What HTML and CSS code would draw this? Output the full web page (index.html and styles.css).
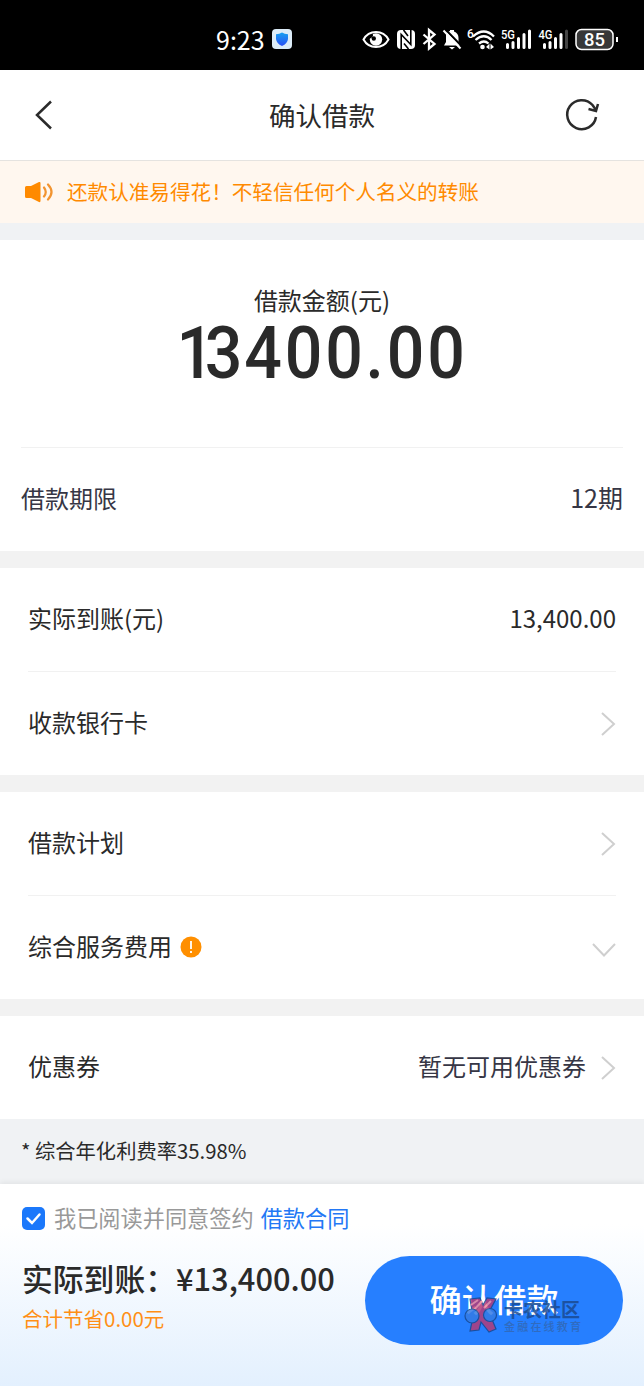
FILE: index.html
```html
<!DOCTYPE html>
<html lang="zh-CN">
<head>
    <meta charset="UTF-8">
    <meta name="viewport" content="width=device-width, initial-scale=1.0">
    <title>确认借款</title>
    <link rel="stylesheet" href="styles.css">
</head>
<body>
    <div class="status-bar">
        <div class="status-time">
            <span>9:23</span>
            <svg width="20" height="20" viewBox="0 0 20 20">
                <defs>
                    <linearGradient id="shield" x1="0" y1="0" x2="0" y2="1">
                        <stop offset="0" stop-color="#16a0f0"/>
                        <stop offset="1" stop-color="#2a50f5"/>
                    </linearGradient>
                </defs>
                <rect width="20" height="20" rx="4" fill="#dcecf8"/>
                <path d="M10 3.5Q12.5 5.3 16 5.3V10Q15.5 14.5 10 17Q4.5 14.5 4 10V5.3Q7.5 5.3 10 3.5Z" fill="url(#shield)"/>
            </svg>
        </div>
        <svg class="status-icons" width="258" height="30" viewBox="362 24 258 30" fill="none" stroke="#fff">
            <!-- eye -->
            <path d="M363.5 39.5C369 29.5 383 29.5 388.5 39.5C383 49.5 369 49.5 363.5 39.5Z" stroke-width="2"/>
            <circle cx="376" cy="39.5" r="6.2" fill="#fff" stroke="none"/>
            <path d="M369.5 35.5L373 34Q373.5 37 370 38.5Z" fill="#000" stroke="none"/>
            <circle cx="373.8" cy="38.5" r="2.2" fill="#000" stroke="none"/>
            <!-- nfc -->
            <rect x="397" y="30" width="18" height="19" rx="4" fill="#fff" stroke="none"/>
            <path d="M401.2 49V34.5L410.8 44.5V30" stroke="#000" stroke-width="1.6"/>
            <path d="M403.500 30L408 36M404 43.500L408.500 49" stroke="#000" stroke-width="1.600"/>
            <!-- bluetooth -->
            <path d="M423.5 34.5L434.5 44L429 48.500V30L434.500 34.500L423.500 44" stroke-width="2.300"/>
            <!-- muted bell -->
            <path d="M446 33Q448 31.500 450 31V30H454V31.500Q458.500 33 458.500 38V42L460.500 45.500H444L446 42Z" fill="#fff" stroke="none"/>
            <path d="M449 47H455L452 49.500Z" fill="#fff" stroke="none"/>
            <path d="M445.500 29.500L462 46.500" stroke="#000" stroke-width="2"/>
            <path d="M443.500 30.500L460.500 48.500" stroke-width="2"/>
            <!-- wifi -->
            <path d="M473 36.5Q484 26.5 494 36.5M475.5 40Q484 32.5 491.5 40M479 43.5Q484 39.5 488.5 43.5" stroke-width="2.3"/>
            <circle cx="482.5" cy="47" r="2.3" fill="#fff" stroke="none"/>
            <path d="M489.5 43.5L486 47L489.5 49.5ZM490.5 43.5L494 47L490.5 49.5Z" fill="#fff" stroke="none"/>
            <!-- signals -->
            <path d="M507.5 44.5V47.5M513 42.5V47.5M518.5 38.5V47.5M524 34.5V47.5M529.5 31V47.5M544.5 44.5V47.5M550 42.5V47.5M555.5 38.5V47.5M561 34.5V47.5" stroke-width="3" stroke-linecap="round"/>
            <path d="M566.5 31V47.5" stroke="#444" stroke-width="3" stroke-linecap="round"/>
            <!-- battery -->
            <rect x="576" y="29.5" width="37" height="20" rx="5.5" fill="#383838" stroke-width="1.5"/>
            <path d="M617 37V42" stroke-width="2"/>
            <g class="status-label" fill="#fff" stroke="none">
                <text x="467" y="37.5" font-size="12">6</text>
                <text x="501" y="39" font-size="13" textLength="14" lengthAdjust="spacingAndGlyphs">5G</text>
                <text x="538.5" y="39" font-size="13" textLength="14" lengthAdjust="spacingAndGlyphs">4G</text>
                <text x="584" y="46" font-size="18" textLength="21" lengthAdjust="spacingAndGlyphs">85</text>
            </g>
        </svg>
    </div>

    <header class="header">
        <svg width="20" height="32" viewBox="0 0 20 32" fill="none" stroke="#2b2b2b" stroke-width="2.5">
            <path d="M17 2.5L3 16L17 29.5"/>
        </svg>
        <h1>确认借款</h1>
        <svg width="36" height="36" viewBox="0 0 36 36" fill="none" stroke="#2b2b2b" stroke-width="2.5">
            <path d="M32 20A14.5 14.5 0 1 1 28.5 8L32 13"/>
            <path d="M24.5 12L32 14L34 7"/>
        </svg>
    </header>

    <div class="notice">
        <svg width="30" height="22" viewBox="0 0 30 22" fill="#ff8a00">
            <path d="M1.5 5H6L14 1Q15.500 0.500 15.500 2V20Q15.500 21.500 14 21L6 17H1.500Q0 17 0 15.500V6.500Q0 5 1.500 5Z"/>
            <path d="M19 6.5Q22.5 11 19 15.5M23 3.5Q30 11 23 18.5" fill="none" stroke="#f29430" stroke-width="2.2" stroke-linecap="round"/>
        </svg>
        <span>还款认准易得花！不轻信任何个人名义的转账</span>
    </div>

    <main>
        <section class="card loan">
            <div class="amount">
                <div class="amount-label">借款金额(元)</div>
                <div class="amount-value"><span class="one">1</span><span class="three">3</span>400.00</div>
            </div>
            <div class="row dark">
                <span>借款期限</span>
                <span class="term">12期</span>
            </div>
        </section>

        <section class="card">
            <div class="row">
                <span>实际到账(元)</span>
                <span>13,400.00</span>
            </div>
            <div class="row">
                <span>收款银行卡</span>
                <svg class="arrow" viewBox="0 0 16 26"><path d="M2 2L14 13L2 24"/></svg>
            </div>
        </section>

        <section class="card">
            <div class="row">
                <span>借款计划</span>
                <svg class="arrow" viewBox="0 0 16 26"><path d="M2 2L14 13L2 24"/></svg>
            </div>
            <div class="row">
                <div class="fee">
                    <span>综合服务费用</span>
                    <svg width="22" height="22" viewBox="0 0 22 22">
                        <circle cx="11" cy="11" r="10.5" fill="#ff8f00"/>
                        <path d="M11 5V13M11 15V17" stroke="#fff" stroke-width="1.8"/>
                    </svg>
                </div>
                <svg class="arrow-down" viewBox="0 0 24 16"><path d="M1 2L12 13.5L23 2"/></svg>
            </div>
        </section>

        <section class="card">
            <div class="row">
                <span>优惠券</span>
                <div class="coupon">
                    <span>暂无可用优惠券</span>
                    <svg class="arrow" viewBox="0 0 16 26"><path d="M2 2L14 13L2 24"/></svg>
                </div>
            </div>
        </section>
    </main>

    <p class="rate">* 综合年化利费率35.98%</p>

    <footer class="footer">
        <div class="agree">
            <svg width="23" height="23" viewBox="0 0 23 23">
                <rect width="23" height="23" rx="5" fill="#1b78fb"/>
                <path d="M5.5 11.5L10 16L17.5 7.5" fill="none" stroke="#fff" stroke-width="2.5" stroke-linecap="round"/>
            </svg>
            <span>我已阅读并同意签约</span>
            <a>借款合同</a>
        </div>
        <div class="pay">
            <div class="total">
                <div class="total-value">实际到账：¥13,400.00</div>
                <div class="saved">合计节省0.00元</div>
            </div>
            <button class="confirm">
                <span class="confirm-text">确认借款</span>
                <span class="watermark">
                    <svg width="34" height="36" viewBox="0 0 34 36" stroke="#174890" stroke-width="1.2">
                        <path d="M6 2L16 1L19 8L23 1L32 2L25 15L32 32L25 35L17 25L15 33L6 34L9 20Z" fill="#b33b78"/>
                        <path d="M7 8L14 3M10 13L18 4M20 11L27 4" stroke="#f58b9c" stroke-width="2"/>
                        <circle cx="8" cy="19" r="7" fill="#347be4"/>
                        <circle cx="26" cy="18" r="6.5" fill="#347be4"/>
                    </svg>
                    <span class="watermark-text">
                        <b>卡农社区</b>
                        <small>金融在线教育</small>
                    </span>
                </span>
            </button>
        </div>
    </footer>
</body>
</html>
```
FILE: styles.css
```css
* {
    margin: 0;
    padding: 0;
    box-sizing: border-box;
}
body {
    width: 644px;
    height: 1386px;
    overflow: hidden;
    display: flex;
    flex-direction: column;
    background: #f0f2f4;
    color: #2a2a2a;
    font-family: 'Noto Sans CJK SC', sans-serif;
    font-size: 24px;
    line-height: 36px;
}
svg {
    display: block;
    flex-shrink: 0;
}

/* Status bar */
.status-bar {
    height: 70px;
    padding: 8px 24px 0 216px;
    background: #000;
    color: #fff;
    display: flex;
    align-items: center;
    justify-content: space-between;
}
.status-time {
    display: flex;
    align-items: center;
    gap: 7px;
    font-size: 25px;
}
.status-time span {
    padding-bottom: 1px;
}
.status-label {
    font-family: Roboto, sans-serif;
    font-weight: 500;
}

/* Header */
.header {
    height: 91px;
    padding: 0 44px 0 34px;
    background: #fff;
    border-bottom: 1px solid #e5e3e0;
    display: flex;
    align-items: center;
    justify-content: space-between;
}
.header h1 {
    font-size: 26.5px;
    font-weight: 400;
    padding-left: 26px;
}
.notice {
    height: 62px;
    padding-left: 25px;
    background: #fff7ef;
    color: #ff8a00;
    display: flex;
    align-items: center;
    gap: 12px;
    font-size: 20.6px;
}
.notice span {
    padding-bottom: 2px;
}

/* Cards */
main {
    border-top: 17px solid #f0f2f4;
    display: flex;
    flex-direction: column;
    gap: 17px;
    background: #f2f2f2;
}
.card {
    background: #fff;
    padding: 0 28px;
}
.row {
    height: 103px;
    display: flex;
    align-items: center;
    justify-content: space-between;
}
.row span {
    padding-bottom: 4px;
}
.row + .row {
    height: 104px;
    border-top: 1px solid #f1f1f1;
}
.loan {
    padding: 0 21px;
}
.loan .row {
    height: 104px;
    border-top: 1px solid #f1f1f1;
}
.dark,
.coupon {
    color: #363645;
}
.row .term {
    font-size: 25px;
    padding-bottom: 5px;
}
.amount {
    height: 207px;
    padding-top: 42px;
    text-align: center;
}
.amount-value {
    font-family: Roboto, sans-serif;
    font-size: 72px;
    font-weight: 500;
    line-height: 72px;
    letter-spacing: 3px;
    transform: scaleX(0.92);
}
.one {
    letter-spacing: -10px;
}
.three {
    letter-spacing: 2px;
}
.arrow {
    width: 16px;
    height: 26px;
}
.arrow-down {
    width: 24px;
    height: 16px;
    margin-top: 4px;
}
.arrow path,
.arrow-down path {
    fill: none;
    stroke: #cfcfcf;
    stroke-width: 2;
}
.fee {
    display: flex;
    align-items: center;
    gap: 8px;
}
.fee svg {
    margin-bottom: 2px;
}
.coupon {
    display: flex;
    align-items: center;
    gap: 14px;
}
.rate {
    height: 65px;
    padding-left: 21px;
    font-size: 20.3px;
    line-height: 63px;
}

/* Bottom bar */
.footer {
    height: 202px;
    padding: 16px 21px 0 22px;
    background: linear-gradient(#fff 20%, #e3f0fe);
    box-shadow: 0 -2px 5px rgba(0, 0, 0, 0.06);
}
.agree {
    height: 36px;
    display: flex;
    align-items: center;
    color: #999;
    font-size: 22.2px;
}
.agree span,
.agree a {
    margin-left: 9px;
    padding-bottom: 3px;
}
.agree a {
    margin-left: 7px;
    color: #2378f5;
}
.pay {
    margin-top: 20px;
    display: flex;
    justify-content: space-between;
}
.total-value {
    font-size: 30.8px;
    font-weight: 500;
    line-height: 44px;
    white-space: nowrap;
}
.saved {
    color: #ff8f16;
    font-size: 20.5px;
    line-height: 36px;
}
.confirm {
    position: relative;
    width: 258px;
    height: 89px;
    border: none;
    border-radius: 45px;
    background: #267fff;
    color: #fff;
    font-family: inherit;
    font-size: 32.3px;
    font-weight: 500;
    line-height: 48px;
}
.confirm-text {
    display: block;
    padding-bottom: 6px;
}
.watermark {
    position: absolute;
    left: 99px;
    top: 41px;
    display: flex;
    gap: 6px;
    color: #1b4b92;
    opacity: 0.85;
}
.watermark-text {
    display: flex;
    flex-direction: column;
    text-align: left;
}
.watermark b {
    font-size: 19px;
    line-height: 24px;
}
.watermark small {
    font-size: 11px;
    line-height: 10px;
    letter-spacing: 2.2px;
    color: #3268b4;
}
```
